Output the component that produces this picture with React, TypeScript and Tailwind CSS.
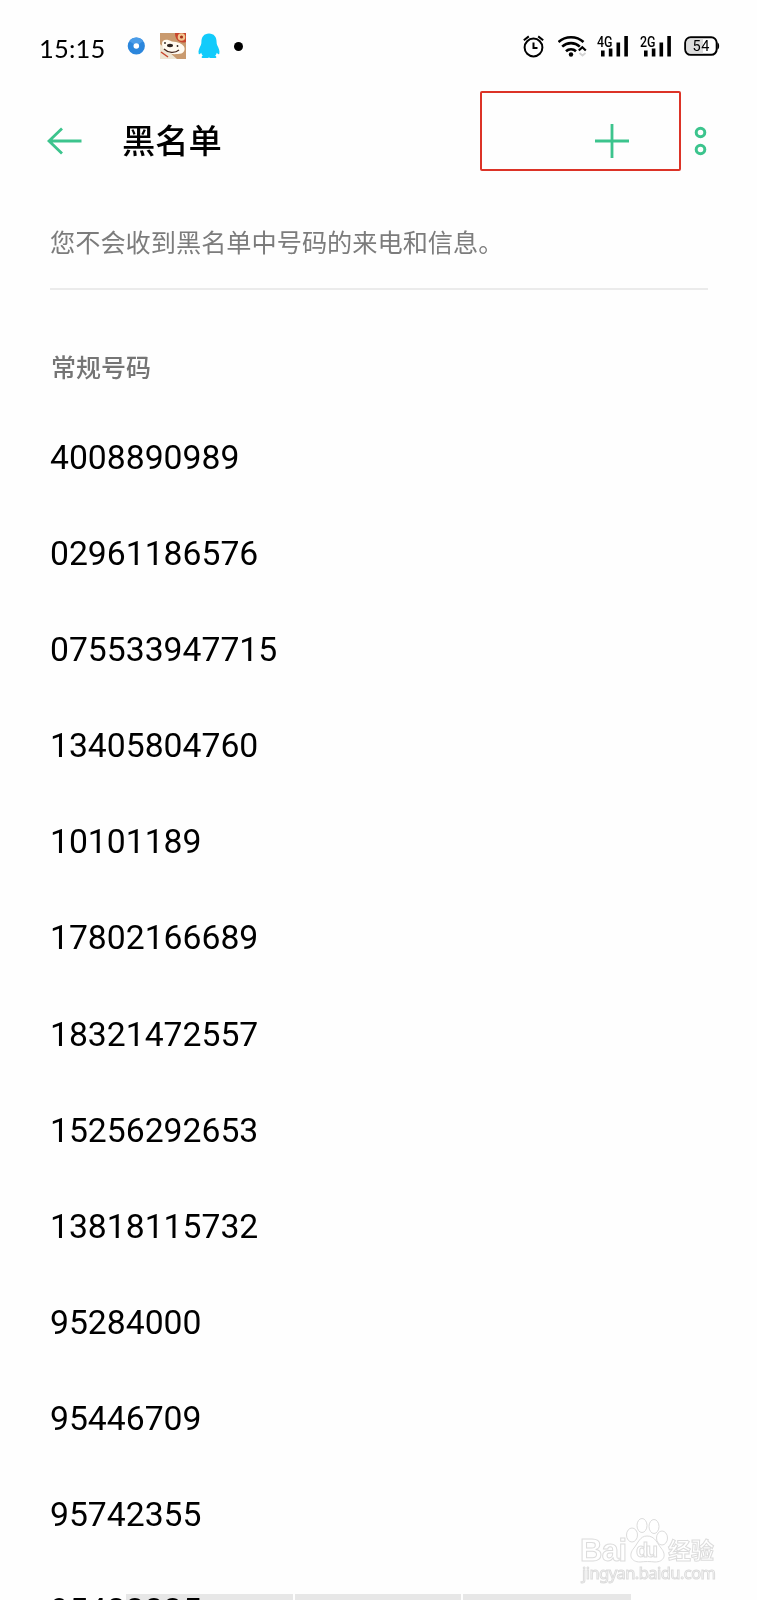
const numbers = [
  "4008890989",
  "02961186576",
  "075533947715",
  "13405804760",
  "10101189",
  "17802166689",
  "18321472557",
  "15256292653",
  "13818115732",
  "95284000",
  "95446709",
  "95742355",
  "95423335",
]

const SignalBars = ({ label }: { label: string }) => (
  <svg width="33" height="24" viewBox="0 0 33 24">
    <text x="0" y="11.5" fontSize="15" fontWeight="500" textLength="15.5" lengthAdjust="spacingAndGlyphs" fontFamily="Roboto, sans-serif">
      {label}
    </text>
    <rect x="4" y="15.5" width="3.6" height="6" />
    <rect x="11.8" y="13.5" width="3.6" height="8" />
    <rect x="19.5" y="7.5" width="3.6" height="14" />
    <rect x="27.3" y="1" width="3.6" height="20.5" />
  </svg>
)

const AlarmIcon = () => (
  <svg width="22" height="24" viewBox="0 0 22 24" fill="none" stroke="#000" strokeWidth="2">
    <circle cx="10.5" cy="12.5" r="8.9" />
    <path d="M10.5 7.5v5.6h4M.8 5.2l5-3.800M20.200 5.200l-5-3.800" />
  </svg>
)

const WifiIcon = () => (
  <svg width="29" height="24" viewBox="0 0 29 24" fill="none" stroke="#000" strokeWidth="2.6">
    <path d="M.5 7C7.500.6 18.500.6 25.500 7M4.200 11.600c5-4.600 12.600-4.600 17.600 0M8 16.200c2.800-2.700 7.200-2.700 10 0" />
    <circle cx="13" cy="19.500" r="2.200" fill="#000" stroke="none" />
    <path d="M20.800 15.500l3.500-3.200 3.500 3.200" strokeWidth="2.200" />
    <path d="M21.500 18l3 2.500 3-2.500" stroke="#d4d4d4" strokeWidth="1.800" />
  </svg>
)

const StatusBar = () => (
  <div className="flex h-[92px] shrink-0 items-start pl-[39px]">
    <span className="mt-[32px] w-[72px] font-[Lato,sans-serif] text-[25.500px] leading-[32px] tracking-[0.200px] whitespace-nowrap">
      15:15
    </span>
    <svg className="mt-[37px] ml-[16px]" width="18" height="18" viewBox="0 0 18 18">
      <circle cx="9.300" cy="9" r="8.600" fill="#2b86dc" />
      <path d="M2.300 4a8.600 8.600 0 0 1 14 0L9.300 9z" fill="#4a9ce8" />
      <circle cx="9.300" cy="9" r="2.800" fill="#fff" />
    </svg>
    <svg className="mt-[33px] ml-[15px]" width="26" height="26" viewBox="0 0 26 26">
      <rect width="26" height="26" fill="#c99a6e" />
      <path d="M0 11l9 8 8 7H0z" fill="#eee5d3" />
      <path d="M15 0h11v9c-6 2-11-2-11-9z" fill="#c8452c" />
      <circle cx="21.500" cy="4" r="3.800" fill="#f2c48e" />
      <circle cx="21.500" cy="4" r="1.600" fill="#a5321c" />
      <path d="M2 11C2 6 7 6 12 8.500c6 .5 10 2 12 5 2 4-1 8-7 7.500C9 22 2 17 2 11z" fill="#fffaf0" />
      <ellipse cx="10" cy="12.500" rx="3" ry="1.700" fill="#2b211d" />
      <path d="M4 16c4 4 11 4.500 15 1" fill="none" stroke="#4a2b20" strokeWidth="1.200" />
      <circle cx="5" cy="10" r="0.900" fill="#2b211d" />
      <circle cx="17.500" cy="13" r="0.900" fill="#2b211d" />
      <path d="M1 19l7 5" stroke="#c8452c" strokeWidth="1.500" />
    </svg>
    <svg className="mt-[33px] ml-[12px]" width="22" height="26" viewBox="0 0 22 26" fill="#12cbfb">
      <path d="M11 .5c5 0 7.600 3.500 7.600 8.500 0 1.200.1 2 .5 3 1.600 3 2.900 6 2.200 8.700-.4 1.200-1.700.3-2.500-.9-.4 1.400-.9 2.200-1.700 3 1.500.7 1.700 1.700.6 2.200H12.300c-.6 0-.7-.5-1.300-.5s-.7.5-1.300.5H4.300c-1.100-.5-.9-1.500.6-2.200-.8-.8-1.300-1.600-1.700-3-.8 1.200-2.100 2.100-2.500.9C0 18 1.300 15 2.900 12c.4-1 .5-1.800.5-3C3.400 4 6 .5 11 .5z" />
    </svg>
    <span className="mt-[42px] ml-[14px] size-[9px] rounded-full bg-black" />

    <div className="mt-[35px] mr-[37px] ml-auto flex">
      <AlarmIcon />
      <div className="ml-[13px] flex">
        <WifiIcon />
      </div>
      <div className="ml-[10px] flex gap-[10px]">
        <SignalBars label="4G" />
        <SignalBars label="2G" />
      </div>
      <svg className="ml-[11px]" width="36" height="24" viewBox="0 0 36 24">
        <rect x="1.200" y="2.300" width="31.500" height="17.500" rx="5.500" fill="#fff" stroke="#000" strokeWidth="2" />
        <path d="M6.500 3.700h12.500v14.700H6.500a4 4 0 0 1-4-4v-6.700a4 4 0 0 1 4-4z" fill="#dcdcdc" />
        <path d="M33.500 7.500c2.200.8 2.200 6.200 0 7z" />
        <text x="8.500" y="16.200" fontSize="14.500" textLength="17" fontFamily="Roboto, sans-serif">54</text>
      </svg>
    </div>
  </div>
)

const Header = () => (
  <div className="-mt-[2px] flex h-[82px] shrink-0 items-start">
    <svg className="mt-[37px] ml-[47px] shrink-0" width="36" height="28" viewBox="0 0 36 28" fill="none" stroke="#3cc48d" strokeWidth="2.800">
      <path d="M34.500 14H2M15 1.500L2 14l13 12.500" />
    </svg>
    <h1 className="mt-[25px] ml-[39px] font-['Noto_Sans_CJK_SC',sans-serif] text-[33.300px] leading-[48px] font-medium whitespace-nowrap">
      黑名单
    </h1>
    <div className="mt-px ml-auto flex h-[80px] w-[201px] shrink-0 justify-end rounded-[2px] border-2 border-[#dc3327] pr-[49px]">
      <svg className="mt-[30px]" width="36" height="36" viewBox="0 0 36 36" stroke="#3cc48d" strokeWidth="2.800">
        <path d="M18 1v34M1 18h34" />
      </svg>
    </div>
    <svg className="mt-[36px] mr-[50px] ml-[13px] shrink-0" width="13" height="30" viewBox="0 0 13 30" fill="none" stroke="#3cc48d" strokeWidth="3">
      <circle cx="6.500" cy="6.500" r="4.300" />
      <circle cx="6.500" cy="23.500" r="4.300" />
    </svg>
  </div>
)

const Watermark = () => (
  <div className="absolute top-[1515px] left-[578px]">
    <svg width="142" height="72" viewBox="0 0 142 72" fill="#fff" stroke="#dcdcdc" strokeWidth="1">
      <text x="2" y="45.500" fontSize="31" fontWeight="700" textLength="47" fontFamily="'Liberation Sans', sans-serif">Bai</text>
      <ellipse cx="54" cy="20" rx="5.500" ry="7" />
      <ellipse cx="64" cy="10.500" rx="5" ry="7" />
      <ellipse cx="76" cy="11.500" rx="5" ry="7" />
      <ellipse cx="84" cy="23" rx="5.500" ry="7" />
      <path d="M69 21c8 0 10 7 14 12 6 7 3 14-6 14-5-.6-10-.6-15 0-9 0-12-7-6-14 4-5 6-12 13-12z" />
      <text x="58" y="42" fontSize="20" fontWeight="700" textLength="22" fontFamily="'Liberation Sans', sans-serif">du</text>
      <text x="90" y="44" fontSize="23" fontWeight="700" textLength="46" fontFamily="'Noto Sans CJK SC', sans-serif">经验</text>
      <text x="4" y="63.500" fontSize="16.500" textLength="134" fontFamily="'Noto Sans', sans-serif">jingyan.baidu.com</text>
    </svg>
  </div>
)

export default function App() {
  return (
    <div className="relative flex h-[1600px] w-[757px] flex-col overflow-hidden bg-[#fefefe] text-black">
      <StatusBar />
      <Header />
      <div className="mx-[50px] mt-[49px] h-[69px] w-[658px] shrink-0 border-b-2 border-[#ebebeb] font-['Noto_Sans_CJK_SC',sans-serif] text-[25.200px] leading-[40px] font-normal text-[#7c7c7c]">
        您不会收到黑名单中号码的来电和信息。
      </div>
      <h2 className="mt-[56px] ml-[51px] h-[41px] shrink-0 font-['Noto_Sans_CJK_SC',sans-serif] text-[25px] leading-[40px] font-medium text-[#757575]">
        常规号码
      </h2>
      <ul className="mt-[23px] ml-[50px] font-[Roboto,sans-serif] text-[33.700px]">
        {numbers.map((number) => (
          <li key={number} className="h-[96.100px] leading-[96.100px]">
            {number}
          </li>
        ))}
      </ul>
      {/* list bottom edge */}
      <div className="absolute bottom-0 left-[126px] flex h-[6px] w-[505px] gap-[2px] mix-blend-multiply">
        <div className="w-[167px] bg-[#e8e8e8]" />
        <div className="w-[166px] bg-[#e8e8e8]" />
        <div className="flex-1 bg-[#e8e8e8]" />
      </div>
      <Watermark />
    </div>
  )
}
